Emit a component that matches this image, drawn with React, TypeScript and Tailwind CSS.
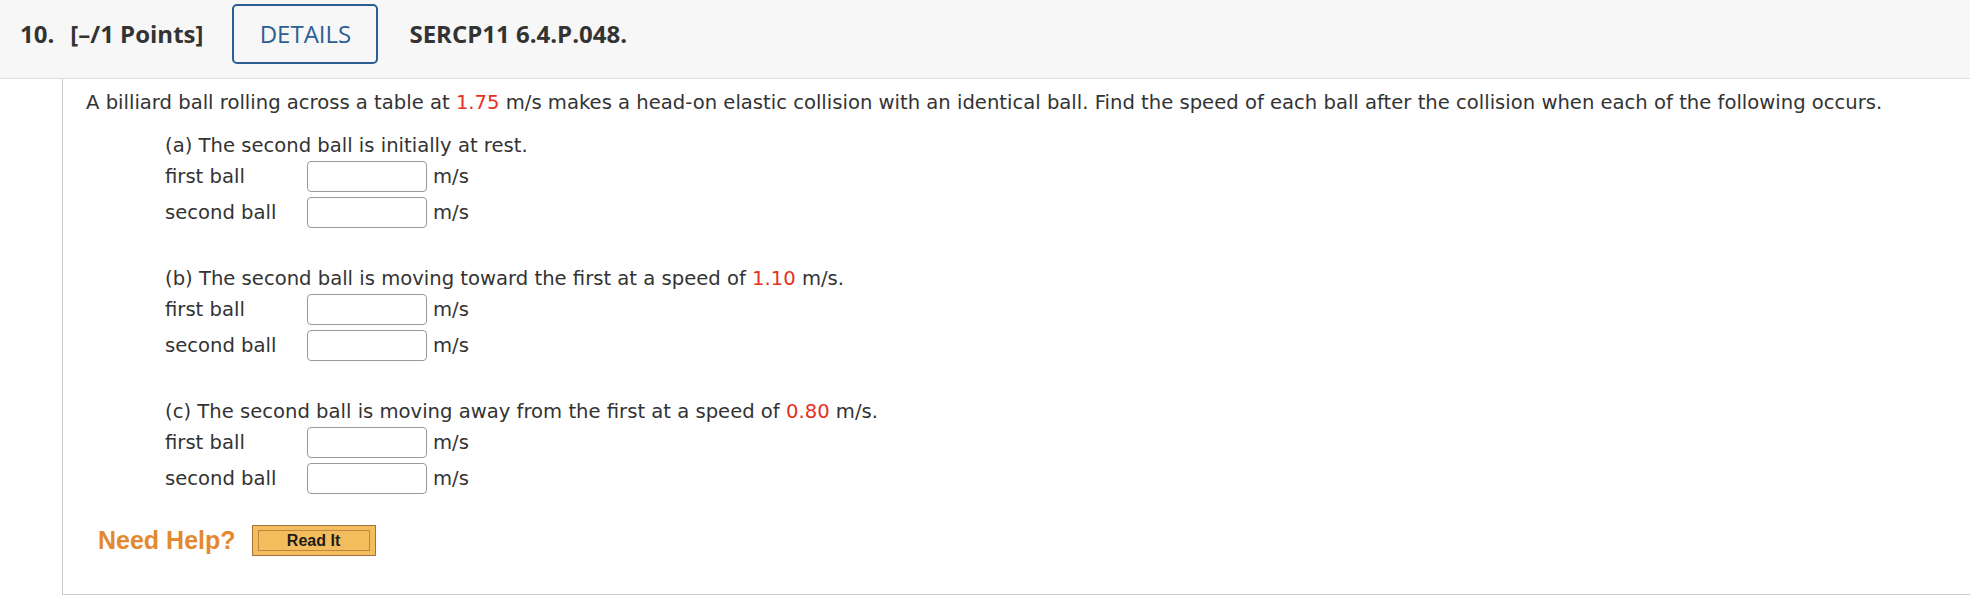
import React from 'react';

const Red = ({ children }: { children: React.ReactNode }) => (
  <span className="text-[#e5311f]">{children}</span>
);

const AnswerRow = ({ label, first }: { label: string; first?: boolean }) => (
  <div className={`flex items-center h-[31px] ${first ? 'mt-0' : 'mt-[5px]'}`}>
    <span className="w-[142px]">{label}</span>
    <input
      type="text"
      className="w-[120px] h-[31px] border border-[#9a9a9a] rounded-[4px] bg-white outline-none"
    />
    <span className="ml-[6px]">m/s</span>
  </div>
);

const Part = ({ children, first }: { children: React.ReactNode; first?: boolean }) => (
  <div className={first ? 'mt-[13px]' : 'mt-[36px]'}>
    <div className="h-[30px] leading-[30px]">{children}</div>
    <AnswerRow label="first ball" first />
    <AnswerRow label="second ball" />
  </div>
);

export default function App() {
  return (
    <div className="w-[1970px] h-[610px] bg-white overflow-hidden">
      {/* question header */}
      <header
        className="h-[79px] bg-[#f7f7f7] border-b border-[#dddddd] flex items-start pt-[4px] pl-[20px] text-[#333] text-[24px]"
        style={{ fontFamily: '"Open Sans", "Liberation Sans", sans-serif' }}
      >
        <div className="flex items-center h-[60px]">
          <span className="font-bold">10.</span>
          <span className="font-bold ml-[16px]">[–/1 Points]</span>
          <button className="ml-[29px] w-[146px] h-[60px] border-2 border-[#2b5f93] rounded-[5px] text-[#2b5f93] bg-transparent">
            DETAILS
          </button>
          <span className="font-bold ml-[31px]">SERCP11 6.4.P.048.</span>
        </div>
      </header>

      {/* question body */}
      <div
        className="ml-[62px] h-[516px] border-l border-b border-[#cccccc] pl-[23px] pt-[9px] text-[#333] text-[19.6px]"
        style={{ fontFamily: '"DejaVu Sans", Verdana, sans-serif' }}
      >
        <div className="h-[30px] leading-[30px] whitespace-nowrap">
          A billiard ball rolling across a table at <Red>1.75</Red> m/s makes a head-on elastic collision with an identical ball. Find the speed of each ball after the collision when each of the following occurs.
        </div>

        <div className="pl-[79px]">
          <Part first>(a) The second ball is initially at rest.</Part>
          <Part>
            (b) The second ball is moving toward the first at a speed of <Red>1.10</Red> m/s.
          </Part>
          <Part>
            (c) The second ball is moving away from the first at a speed of <Red>0.80</Red> m/s.
          </Part>
        </div>

        <div
          className="flex items-center mt-[31px] ml-[12px] h-[31px]"
          style={{ fontFamily: '"Liberation Sans", Arial, sans-serif' }}
        >
          <span className="text-[25px] font-bold text-[#e3892f]">Need Help?</span>
          <button className="ml-[16px] w-[124px] h-[31px] border border-[#a2713c] bg-[#f3bd5d] p-[4px_5px]">
            <div className="h-full w-full border border-[#c08541] flex items-center justify-center text-[16px] font-bold text-[#1c1c1c]">
              Read It
            </div>
          </button>
        </div>
      </div>
    </div>
  );
}
